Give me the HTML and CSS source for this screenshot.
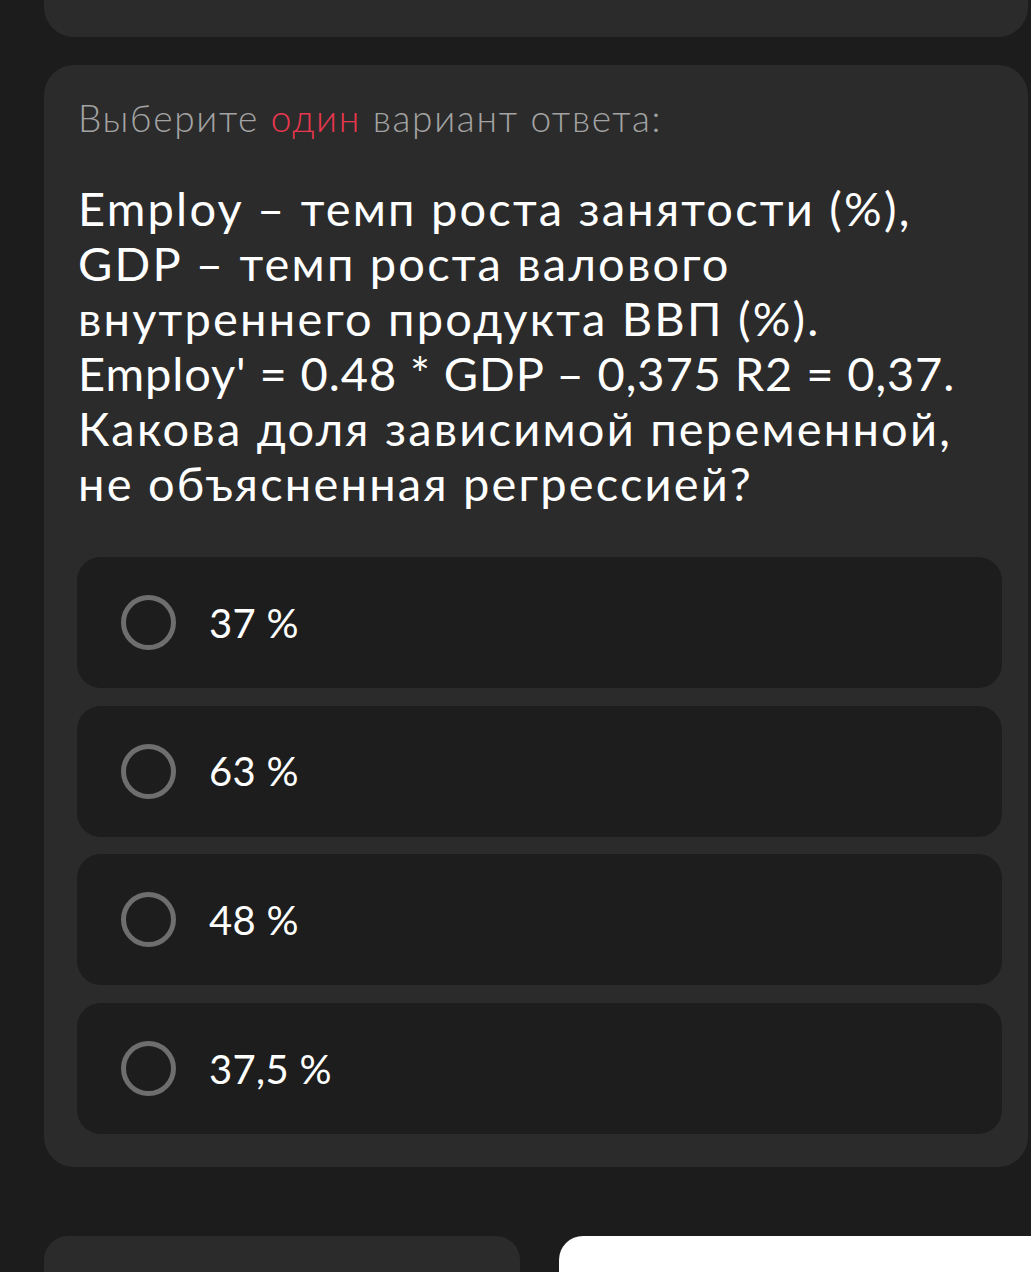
FILE: index.html
```html
<!DOCTYPE html>
<html lang="ru">
<head>
<meta charset="utf-8">
<link rel="stylesheet" href="styles.css">
</head>
<body>
<div class="page">
  <div class="card card-top"></div>
  <div class="card card-main">
    <div class="hint">Выберите <span class="accent">один</span> вариант ответа:</div>
    <div class="question">Employ – темп роста занятости (%),<br>GDP – темп роста валового<br>внутреннего продукта ВВП (%).<br><span class="tight">Employ' = 0.48 * GDP – 0,375 R2 = 0,37.</span><br>Какова доля зависимой переменной,<br>не объясненная регрессией?</div>
    <div class="options">
      <div class="option"><span class="radio"></span><span class="label">37 %</span></div>
      <div class="option"><span class="radio"></span><span class="label">63 %</span></div>
      <div class="option"><span class="radio"></span><span class="label">48 %</span></div>
      <div class="option"><span class="radio"></span><span class="label">37,5 %</span></div>
    </div>
  </div>
  <div class="bottom">
    <div class="btn btn-dark"></div>
    <div class="btn btn-light"></div>
  </div>
</div>
</body>
</html>
```
FILE: styles.css
```css
html, body {
  margin: 0;
  padding: 0;
  background: #1c1c1c;
  overflow: hidden;
}
.page {
  height: 1272px;
  font-family: "Lato", "Open Sans", sans-serif;
  color: #ffffff;
}
.card {
  background: #2b2b2b;
  border-radius: 30px;
  margin: 0 3px 0 44px;
}
.card-top {
  height: 37px;
  border-radius: 0 0 30px 30px;
  margin-bottom: 28px;
}
.card-main {
  padding: 31px 26px 33px 33px;
}
.hint {
  font-size: 37px;
  font-weight: 300;
  line-height: 44px;
  letter-spacing: 1.7px;
  color: #a3a3a3;
  padding-left: 1px;
}
.accent {
  color: #e8374e;
}
.question {
  margin-top: 41px;
  font-size: 47px;
  line-height: 55px;
  letter-spacing: 2.2px;
  font-weight: 400;
  padding-left: 1px;
  white-space: nowrap;
}
.tight {
  letter-spacing: 0.9px;
}
.options {
  margin-top: 46px;
  display: flex;
  flex-direction: column;
  gap: 17.7px;
}
.option {
  height: 131px;
  background: #1d1d1d;
  border-radius: 24px;
  display: flex;
  align-items: center;
  padding-left: 44px;
}
.radio {
  width: 45px;
  height: 45px;
  border: 5px solid #6e6e6e;
  border-radius: 50%;
  flex: none;
}
.label {
  margin-left: 33px;
  font-size: 40px;
  font-weight: 400;
  letter-spacing: 0.3px;
}
.bottom {
  margin-top: 69px;
  display: flex;
  gap: 39px;
  padding-left: 44px;
}
.btn {
  height: 80px;
  border-radius: 24px 24px 0 0;
}
.btn-dark {
  width: 476px;
  background: #2b2b2b;
}
.btn-light {
  flex: 1;
  background: #ffffff;
  border-radius: 24px 0 0 0;
}
```
